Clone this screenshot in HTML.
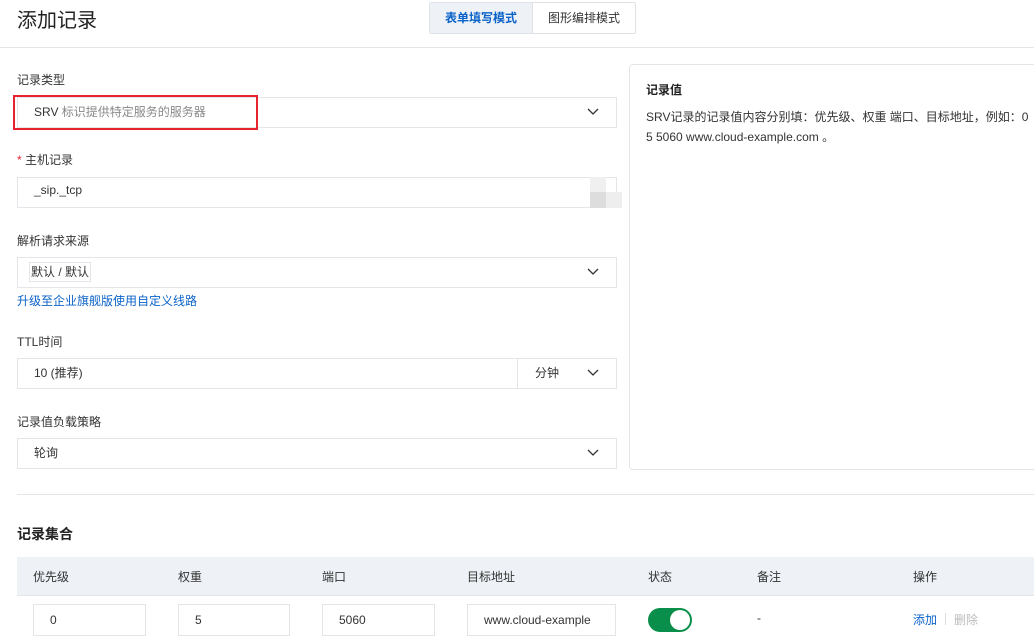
<!DOCTYPE html>
<html><head><meta charset="utf-8"><style>
*{box-sizing:border-box;margin:0;padding:0}
body{width:1034px;height:636px;overflow:hidden;background:#fff;font-family:"Liberation Sans","Noto Sans CJK SC",sans-serif;color:#333;font-size:12px;position:relative}
.a{position:absolute}
.lbl{position:absolute;left:17px;font-size:12px;color:#333}
.box{position:absolute;left:17px;width:600px;height:31px;border:1px solid #e3e5e8;background:#fff}
.box span.t{position:absolute;left:16px;top:5px;font-size:12px;color:#333}
.chev{position:absolute;right:16px;top:9px;width:14px;height:10px}
.th{position:absolute;top:568px;font-size:12px;color:#333}
.in{position:absolute;top:604px;height:32px;border:1px solid #e3e5e8;font-size:12px;padding:8px 0 0 16px;color:#333}
</style></head><body>
<div class="a" style="left:17px;top:4px;font-size:20px;color:#222">添加记录</div>
<div class="a" style="left:429px;top:2px;width:207px;height:32px;border:1px solid #dfe2e6;border-radius:2px;background:#fff"></div>
<div class="a" style="left:430px;top:3px;width:103px;height:30px;background:#eef2f7;border-right:1px solid #dfe2e6;color:#0b63c9;font-weight:bold;font-size:12px;text-align:center;line-height:30px">表单填写模式</div>
<div class="a" style="left:533px;top:3px;width:102px;height:30px;color:#333;font-size:12px;text-align:center;line-height:30px">图形编排模式</div>
<div class="a" style="left:0;top:47px;width:1034px;height:1px;background:#e3e5e8"></div>

<div class="lbl" style="top:71px">记录类型</div>
<div class="box" style="top:97px"><span class="t">SRV <span style="color:#888">标识提供特定服务的服务器</span></span><svg class="chev" viewBox="0 0 14 10"><path d="M2 2l5 5 5-5" fill="none" stroke="#333" stroke-width="1.3"/></svg></div>
<div class="a" style="left:13px;top:95px;width:245px;height:35px;border:2px solid #e8232f"></div>

<div class="lbl" style="top:151px"><span style="color:#e8232f">*</span> 主机记录</div>
<div class="box" style="top:177px"><span class="t">_sip._tcp</span></div>
<div class="a" style="left:590px;top:177px;width:16px;height:15px;background:#f0f0f0"></div>
<div class="a" style="left:590px;top:192px;width:16px;height:16px;background:#ddd"></div>
<div class="a" style="left:606px;top:192px;width:16px;height:16px;background:#eee"></div>

<div class="lbl" style="top:232px">解析请求来源</div>
<div class="box" style="top:257px"><span class="a" style="left:11px;top:4px;width:62px;height:20px;border:1px solid #e3e5e8;font-size:12px;line-height:18px;text-align:center;color:#333">默认 / 默认</span><svg class="chev" viewBox="0 0 14 10"><path d="M2 2l5 5 5-5" fill="none" stroke="#333" stroke-width="1.3"/></svg></div>
<div class="lbl" style="top:292px;color:#0b63c9">升级至企业旗舰版使用自定义线路</div>

<div class="lbl" style="top:333px">TTL时间</div>
<div class="box" style="top:358px"><span class="t">10 (推荐)</span><div class="a" style="left:499px;top:0;width:1px;height:29px;background:#e3e5e8"></div><span class="a" style="left:517px;top:5px">分钟</span><svg class="chev" viewBox="0 0 14 10"><path d="M2 2l5 5 5-5" fill="none" stroke="#333" stroke-width="1.3"/></svg></div>

<div class="lbl" style="top:413px">记录值负载策略</div>
<div class="box" style="top:438px"><span class="t">轮询</span><svg class="chev" viewBox="0 0 14 10"><path d="M2 2l5 5 5-5" fill="none" stroke="#333" stroke-width="1.3"/></svg></div>

<div class="a" style="left:629px;top:64px;width:420px;height:406px;border:1px solid #e3e5e8;border-radius:4px"></div>
<div class="a" style="left:646px;top:81px;font-size:12px;font-weight:bold;color:#222">记录值</div>
<div class="a" style="left:646px;top:107px;width:390px;font-size:12px;line-height:20px;color:#333">SRV记录的记录值内容分别填：优先级、权重 端口、目标地址，例如：0<br>5 5060 www.cloud-example.com 。</div>

<div class="a" style="left:17px;top:494px;width:1017px;height:1px;background:#e3e5e8"></div>
<div class="a" style="left:17px;top:524px;font-size:14px;font-weight:bold;color:#222">记录集合</div>
<div class="a" style="left:17px;top:557px;width:1017px;height:39px;background:#eef1f6;border-bottom:1px solid #e3e5e8"></div>
<div class="th" style="left:33px">优先级</div><div class="th" style="left:178px">权重</div><div class="th" style="left:322px">端口</div><div class="th" style="left:467px">目标地址</div><div class="th" style="left:648px">状态</div><div class="th" style="left:757px">备注</div><div class="th" style="left:913px">操作</div>
<div class="in" style="left:33px;width:113px">0</div>
<div class="in" style="left:178px;width:112px">5</div>
<div class="in" style="left:322px;width:113px">5060</div>
<div class="in" style="left:467px;width:149px">www.cloud-example</div>
<div class="a" style="left:648px;top:608px;width:44px;height:24px;border-radius:12px;background:#0a8f4a"></div>
<div class="a" style="left:670px;top:610px;width:20px;height:20px;border-radius:10px;background:#fff"></div>
<div class="a" style="left:757px;top:611px">-</div>
<div class="a" style="left:913px;top:611px;color:#0b63c9">添加</div>
<div class="a" style="left:945px;top:613px;width:1px;height:12px;background:#ddd"></div>
<div class="a" style="left:954px;top:611px;color:#bbb">删除</div>
</body></html>
